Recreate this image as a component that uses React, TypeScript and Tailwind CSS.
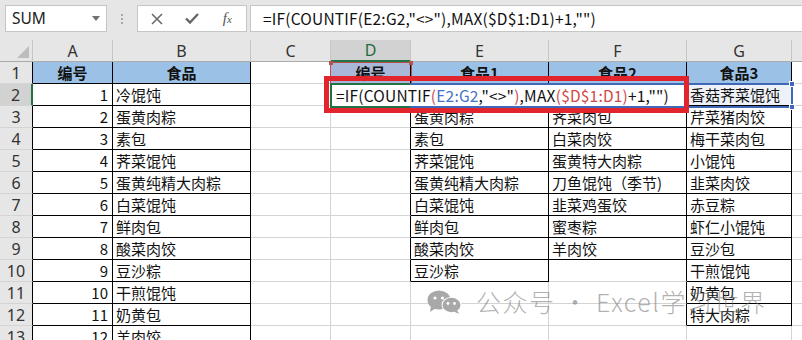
import React from 'react';

type V = string | number;

const data: V[][] = [
  ['编号', '食品', '', '编号', '食品1', '食品2', '食品3', ''],
  [1, '冷馄饨', '', '', '', '', '香菇荠菜馄饨', ''],
  [2, '蛋黄肉粽', '', '', '蛋黄肉粽', '荠菜肉包', '芹菜猪肉饺', ''],
  [3, '素包', '', '', '素包', '白菜肉饺', '梅干菜肉包', ''],
  [4, '荠菜馄饨', '', '', '荠菜馄饨', '蛋黄特大肉粽', '小馄饨', ''],
  [5, '蛋黄纯精大肉粽', '', '', '蛋黄纯精大肉粽', '刀鱼馄饨（季节)', '韭菜肉饺', ''],
  [6, '白菜馄饨', '', '', '白菜馄饨', '韭菜鸡蛋饺', '赤豆粽', ''],
  [7, '鲜肉包', '', '', '鲜肉包', '蜜枣粽', '虾仁小馄饨', ''],
  [8, '酸菜肉饺', '', '', '酸菜肉饺', '羊肉饺', '豆沙包', ''],
  [9, '豆沙粽', '', '', '豆沙粽', '', '干煎馄饨', ''],
  [10, '干煎馄饨', '', '', '', '', '奶黄包', ''],
  [11, '奶黄包', '', '', '', '', '特大肉粽', ''],
  [12, '羊肉饺', '', '', '', '', '', ''],
];

const COLS = ['A', 'B', 'C', 'D', 'E', 'F', 'G', 'H'];

function bordered(r: number, c: number): boolean {
  if (r < 0 || c < 0 || c > 7) return false;
  if (c === 0 || c === 1) return true;
  if (c === 3) return r <= 1;
  if (c === 4) return r <= 9;
  if (c === 5) return r <= 8;
  if (c === 6) return r <= 11;
  return false;
}

const FONT = { fontFamily: '"Noto Sans CJK SC", "Noto Sans", sans-serif' };

function DataCell({ r, c, v }: { r: number; c: number; v: V }) {
  const rb = bordered(r, c) || bordered(r, c + 1);
  const bb = bordered(r, c) || bordered(r + 1, c);
  const isHead = r === 0 && (c <= 1 || c >= 3) && c <= 6;
  const isNum = typeof v === 'number';
  let bg = 'bg-white';
  if (isHead) bg = c === 3 ? 'bg-[#a9b8d8]' : 'bg-[#9bc2e6]';
  if (r === 1 && c === 6) bg = 'bg-[#eef1f8]';
  return (
    <div
      className={[
        'h-[22px] border-r border-b overflow-hidden whitespace-nowrap text-[15px] leading-[21px] text-[#111]',
        rb ? 'border-r-black' : 'border-r-[#d4d4d4]',
        bb ? 'border-b-black' : 'border-b-[#d4d4d4]',
        bg,
        isHead ? 'font-bold text-center' : isNum ? 'text-right pr-[4px]' : 'text-left pl-[3px]',
      ].join(' ')}
    >
      {v}
    </div>
  );
}

function WeChat() {
  return (
    <svg width="36" height="24" viewBox="0 0 36 24">
      <ellipse cx="12" cy="10" rx="11.5" ry="9.5" fill="#a8a8a8" />
      <path d="M4 16 L3 22 L9 18 Z" fill="#a8a8a8" />
      <circle cx="8" cy="8" r="1.6" fill="#fff" />
      <circle cx="15.5" cy="8" r="1.6" fill="#fff" />
      <ellipse cx="24.5" cy="15" rx="10" ry="8" fill="#fff" />
      <ellipse cx="24.5" cy="15" rx="9" ry="7.2" fill="#a8a8a8" />
      <path d="M30 20 L32 24 L27 21.5 Z" fill="#a8a8a8" />
      <circle cx="21" cy="13.5" r="1.4" fill="#fff" />
      <circle cx="27.5" cy="13.5" r="1.4" fill="#fff" />
    </svg>
  );
}

export default function App() {
  return (
    <div className="relative w-[802px] h-[340px] overflow-hidden bg-white" style={FONT}>
      {/* toolbar */}
      <div className="h-[40px] bg-[#e6e6e6] flex items-start pt-[5px]">
        <div className="ml-[5px] w-[102px] h-[27px] bg-white border border-[#c6c6c6] flex items-center justify-between pl-[6px] pr-[6px]">
          <span className="text-[15.5px] text-[#222]" style={{ fontFamily: '"Noto Sans", sans-serif' }}>SUM</span>
          <svg width="8" height="5" viewBox="0 0 8 5"><path d="M0 0 L8 0 L4 5 Z" fill="#707070" /></svg>
        </div>
        <div className="w-[30px] h-[27px] flex flex-col items-center justify-center gap-[2px]">
          <div className="w-[2px] h-[2px] bg-[#a8a8a8]" />
          <div className="w-[2px] h-[2px] bg-[#a8a8a8]" />
          <div className="w-[2px] h-[2px] bg-[#a8a8a8]" />
        </div>
        <div className="w-[110px] h-[27px] bg-white border border-[#c6c6c6] flex items-center px-[1px]">
          <div className="w-[36px] flex justify-center">
            <svg width="12" height="12" viewBox="0 0 12 12"><path d="M1 1 L11 11 M11 1 L1 11" stroke="#666" strokeWidth="1.5" /></svg>
          </div>
          <div className="w-[36px] flex justify-center">
            <svg width="14" height="11" viewBox="0 0 14 11"><path d="M1 5.5 L5 9.5 L13 1" stroke="#666" strokeWidth="2.4" fill="none" /></svg>
          </div>
          <div className="w-[36px] flex justify-center">
            <span className="italic text-[15px] text-[#555] leading-none" style={{ fontFamily: '"Liberation Serif", serif' }}>
              f<span className="text-[11px]">x</span>
            </span>
          </div>
        </div>
        <div className="ml-[3px] flex-1 -mr-[2px] h-[27px] bg-white border border-[#c6c6c6] flex items-center pl-[12px] text-[15.5px] tracking-[0.2px] text-[#111] whitespace-nowrap">
          =IF(COUNTIF(E2:G2,"&lt;&gt;"),MAX($D$1:D1)+1,"")
        </div>
      </div>

      {/* grid */}
      <div className="grid grid-cols-[33px_80px_138px_80px_80px_138px_138px_105px_80px] auto-rows-[22px]">
        <div className="bg-[#e6e6e6] border-r border-b border-r-[#c6c6c6] border-b-[#ababab] flex items-end justify-end pr-[3px] pb-[3px]">
          <svg width="12" height="12" viewBox="0 0 12 12"><path d="M12 0 L12 12 L0 12 Z" fill="#bdbdbd" /></svg>
        </div>
        {COLS.map((L, i) => (
          <div
            key={L}
            className={
              i === 3
                ? 'bg-[#d2d2d2] border-r border-r-[#c6c6c6] border-b-2 border-b-[#217346] flex items-center justify-center text-[16px] text-[#1e6b3e]'
                : 'bg-[#e6e6e6] border-r border-r-[#c6c6c6] border-b border-b-[#ababab] flex items-center justify-center text-[16px] text-[#333]'
            }
            style={{ fontFamily: '"Noto Sans", sans-serif' }}
          >
            {L}
          </div>
        ))}
        {data.map((row, r) => (
          <React.Fragment key={r}>
            <div
              className={
                r === 1
                  ? 'bg-[#d2d2d2] border-b border-b-[#d4d4d4] border-r-2 border-r-[#217346] flex items-center justify-center text-[16px] text-[#333]'
                  : 'bg-[#e6e6e6] border-b border-b-[#d4d4d4] border-r border-r-black flex items-center justify-center text-[16px] text-[#333]'
              }
              style={{ fontFamily: '"Noto Sans", sans-serif' }}
            >
              {r + 1}
            </div>
            {row.map((v, c) => (
              <DataCell key={c} r={r} c={c} v={v} />
            ))}
          </React.Fragment>
        ))}
      </div>

      {/* D1 reference highlight */}
      <div className="absolute left-[330px] top-[62px] w-[82px] h-[23px] border border-[#b8504e]" />
      <div className="absolute left-[329px] top-[61px] w-[4px] h-[4px] bg-[#b8504e]" />
      <div className="absolute left-[409px] top-[61px] w-[4px] h-[4px] bg-[#b8504e]" />

      {/* E2:G2 reference box */}
      <div className="absolute left-[410px] top-[83px] w-[383px] h-[25px] border-2 border-[#4068b8]" />
      <div className="absolute left-[789px] top-[81px] w-[6px] h-[6px] bg-[#4068b8] border border-white" />
      <div className="absolute left-[789px] top-[104px] w-[6px] h-[6px] bg-[#4068b8] border border-white" />

      {/* edit area */}
      <div className="absolute left-[331px] top-[85px] w-[355px] h-[21px] bg-white flex items-center pl-[5px] text-[15.5px] tracking-[0.2px] text-[#111] whitespace-nowrap">
        <span>=IF(COUNTIF</span>
        <span className="text-[#c84a5a]">(</span>
        <span className="text-[#4472c4]">E2:G2</span>
        <span>,"&lt;&gt;"</span>
        <span className="text-[#c84a5a]">)</span>
        <span>,MAX</span>
        <span className="text-[#d04848]">($D$1:D1)</span>
        <span>+1,"")</span>
      </div>
      <div className="absolute left-[330px] top-[83px] w-[80px] h-[25px] border-l-2 border-t-2 border-b-2 border-[#217346]" />

      {/* red callout */}
      <div className="absolute left-[324px] top-[76px] w-[365px] h-[37px] border-[5px] border-[#e2252d]" />

      {/* watermark */}
      <div className="absolute left-[427px] top-[283px] flex items-center gap-[13px]">
        <WeChat />
        <span className="text-[25px] font-light tracking-[1.5px] text-[rgba(110,110,110,0.55)] whitespace-nowrap">公众号 · Excel学习世界</span>
      </div>
    </div>
  );
}
